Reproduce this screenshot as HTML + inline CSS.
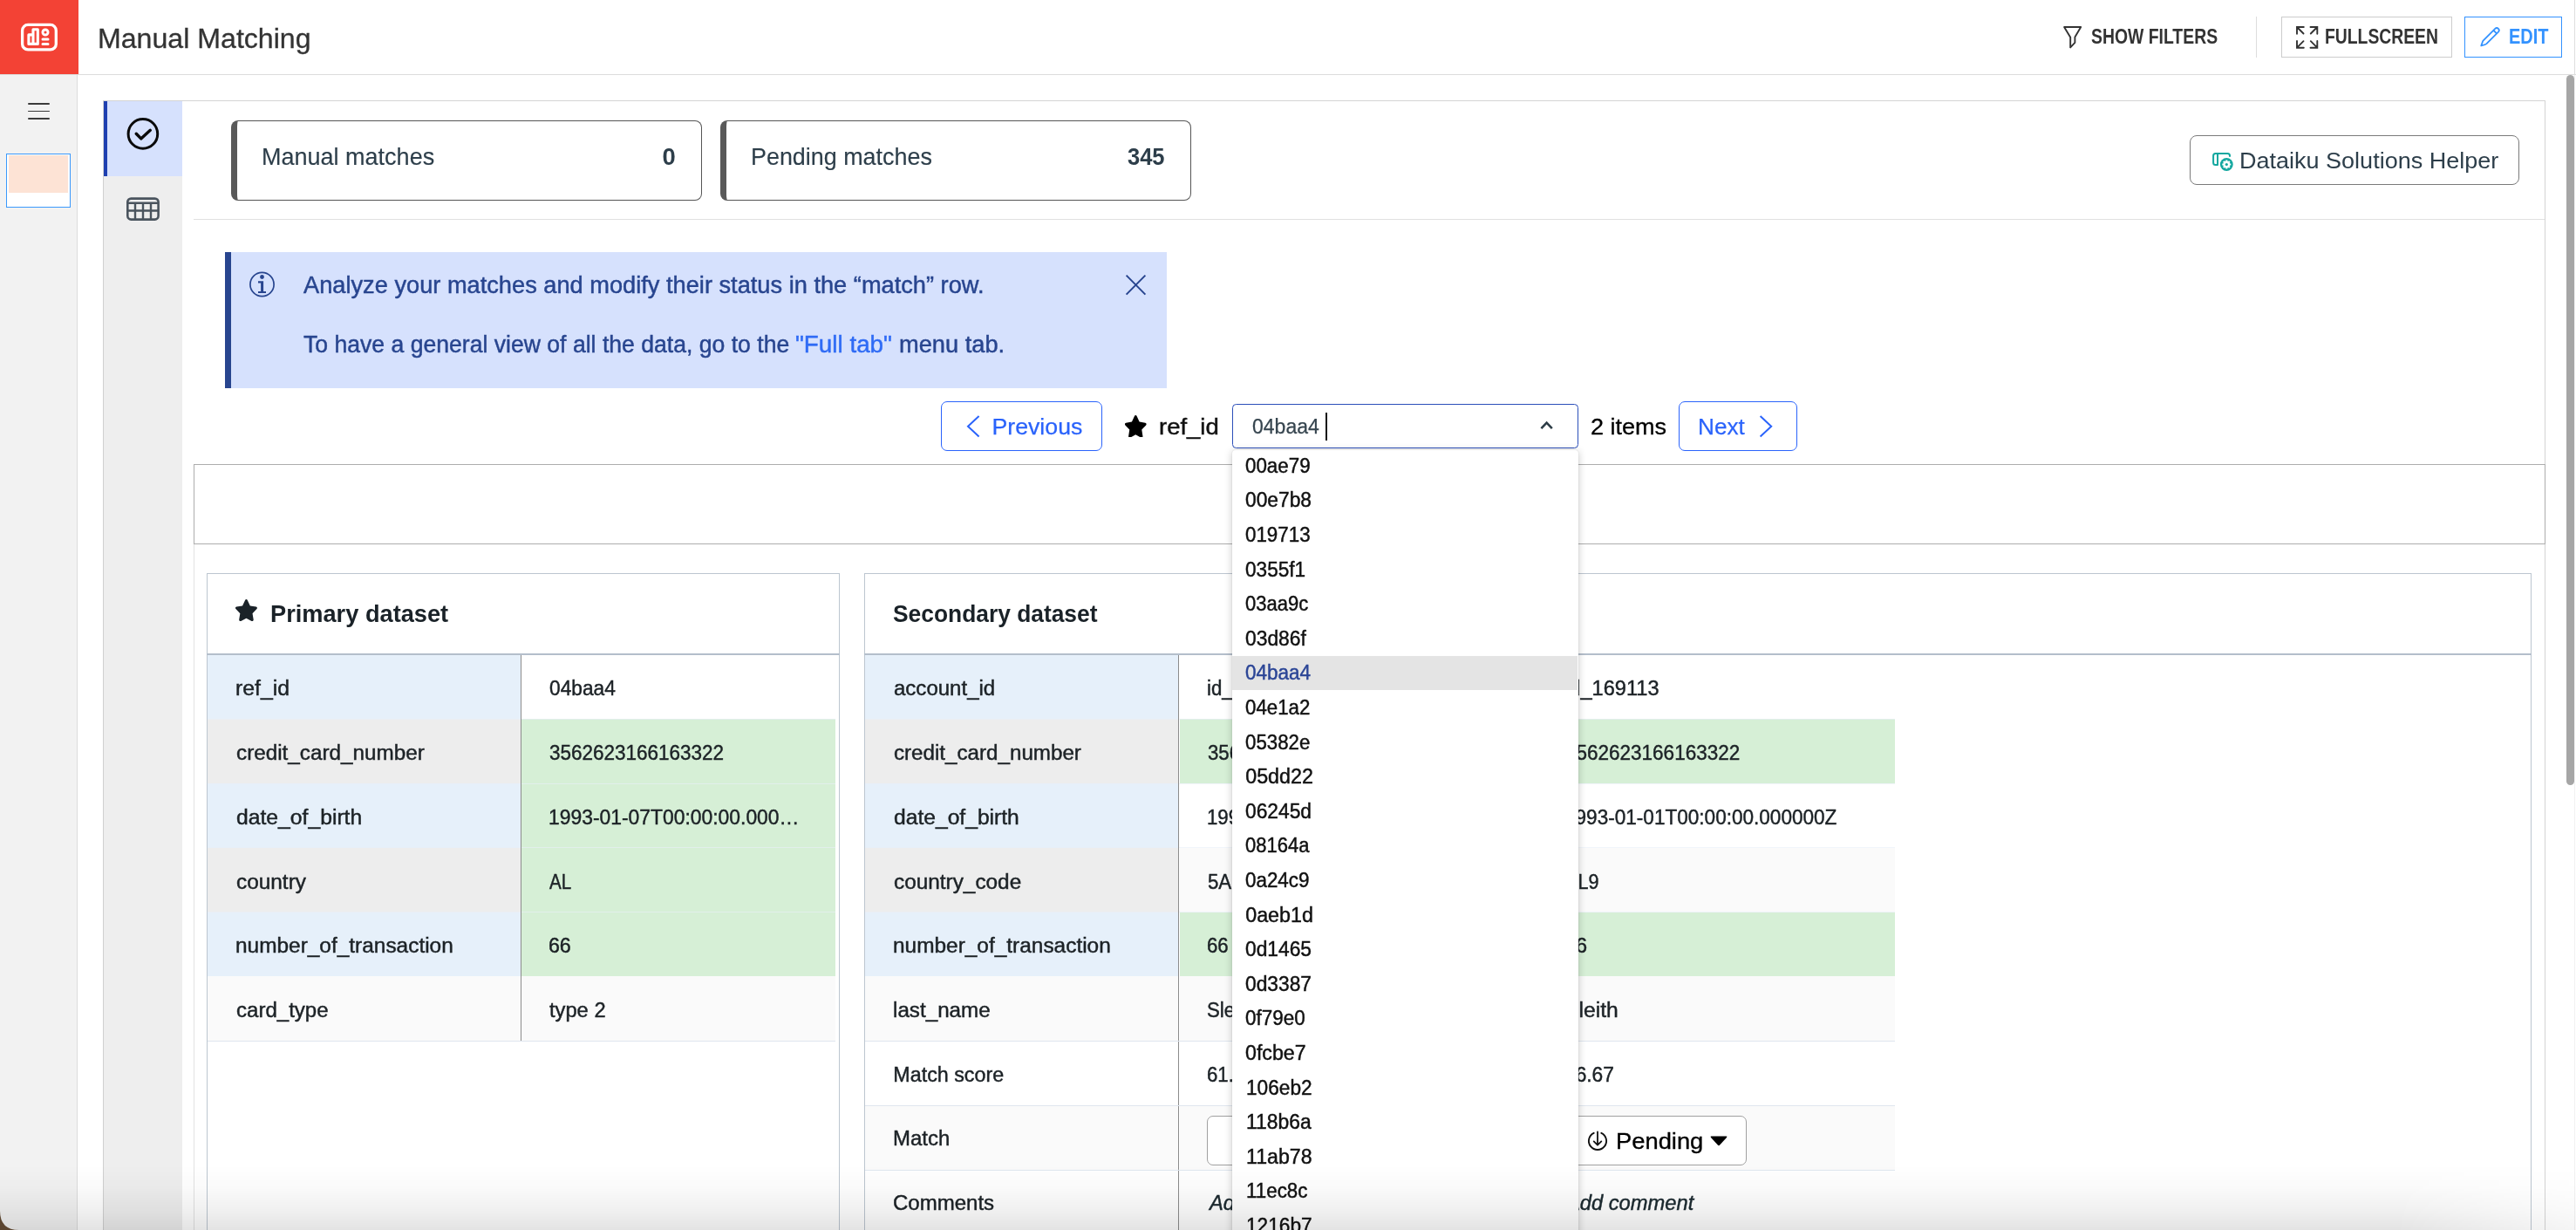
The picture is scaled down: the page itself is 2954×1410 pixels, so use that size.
<!DOCTYPE html>
<html><head><meta charset="utf-8"><title>Manual Matching</title>
<style>
html,body{margin:0;padding:0;}
html{width:2954px;height:1410px;overflow:hidden;}
body{width:2954px;height:1410px;position:relative;overflow:hidden;background:#fff;font-family:"Liberation Sans", sans-serif;}
div,span.t,svg{position:absolute;box-sizing:border-box;}
span.t{white-space:pre;display:block;transform-origin:0 0;-webkit-text-stroke:0.45px currentColor;}
span.b{-webkit-text-stroke:0 !important;}
</style></head><body><div id="root" style="left:0;top:0;width:2954px;height:1410px;overflow:hidden;will-change:transform;">
<div style="left:0px;top:0px;width:2954px;height:85px;background:#fff;"></div>
<div style="left:0px;top:85px;width:2954px;height:1px;background:#dcdcdc;"></div>
<div style="left:0px;top:0px;width:90px;height:85px;background:#f34235;"></div>
<svg style="left:0;top:0" width="90" height="85" viewBox="0 0 90 85" fill="none" stroke="#fff" stroke-linecap="round" stroke-linejoin="round">
<rect x="25.6" y="28.4" width="38.7" height="28.5" rx="6.5" stroke-width="3.3"/>
<path d="M32.9 50.4V39.9H38V33.7H43.3V50.4Z M38 39.9V50.4" stroke-width="3.1"/>
<circle cx="52" cy="37" r="3.05" stroke-width="2.9"/>
<path d="M49 45.1H55 M49 50.6H55" stroke-width="3"/>
</svg>
<span class="t" style="left:112.16px;top:29px;font-size:31.5px;line-height:31.5px;color:#333;transform:scaleX(1.0196);-webkit-text-stroke-width:0.3px;">Manual Matching</span>
<svg style="left:2360px;top:26px" width="34" height="34" viewBox="2360 26 34 34" fill="none" stroke="#333" stroke-width="1.9" stroke-linejoin="round">
<path d="M2367.1 31H2386.2L2379.4 42.5V48.8L2374.2 54.4V42.8Z"/></svg>
<span class="t b" style="left:2397.60px;top:31px;font-size:23.2px;line-height:23.2px;color:#333;font-weight:700;transform:scaleX(0.8364);">SHOW FILTERS</span>
<div style="left:2587px;top:19px;width:1px;height:47px;background:#ddd;"></div>
<div style="left:2616px;top:19px;width:196px;height:47px;border:1px solid #ccc;background:#fff;"></div>
<svg style="left:2628px;top:26px" width="36" height="34" viewBox="2628 26 36 34" fill="none" stroke="#333" stroke-width="1.9" stroke-linecap="round" stroke-linejoin="miter">
<path d="M2634 38.8V31H2641.8 M2634 31L2641.5 38.5"/>
<path d="M2649.5 31H2657.3V38.8 M2657.3 31L2649.8 38.5"/>
<path d="M2634 46.9V54.7H2641.8 M2634 54.7L2641.5 47.2"/>
<path d="M2649.5 54.7H2657.3V46.9 M2657.3 54.7L2649.8 47.2"/>
</svg>
<span class="t b" style="left:2666.17px;top:31px;font-size:23.2px;line-height:23.2px;color:#333;font-weight:700;transform:scaleX(0.8337);">FULLSCREEN</span>
<div style="left:2826px;top:19px;width:112px;height:47px;border:1.3px solid #3392ff;background:#fff;"></div>
<svg style="left:2840px;top:28px" width="32" height="30" viewBox="2840 28 32 30" fill="none" stroke="#3392ff" stroke-width="1.8" stroke-linejoin="round" stroke-linecap="round">
<path d="M2845.3 52.4L2847.3 46.8L2861.26 32.86A2.6 2.6 0 0 1 2864.94 36.54L2851.4 50.1Q2850.3 51 2845.3 52.4Z M2859.36 34.76L2863.04 38.44"/></svg>
<span class="t b" style="left:2876.64px;top:31px;font-size:23.2px;line-height:23.2px;color:#3392ff;font-weight:700;transform:scaleX(0.8615);">EDIT</span>
<div style="left:0px;top:86px;width:88px;height:1324px;background:#f2f2f2;"></div>
<div style="left:88px;top:86px;width:1px;height:1324px;background:#dcdcdc;"></div>
<div style="left:32px;top:118.4px;width:25px;height:1.8px;background:#3a3a3a;border-radius:1px;"></div>
<div style="left:32px;top:126.6px;width:25px;height:1.8px;background:#3a3a3a;border-radius:1px;"></div>
<div style="left:32px;top:134.8px;width:25px;height:1.8px;background:#3a3a3a;border-radius:1px;"></div>
<div style="left:7px;top:176px;width:74px;height:62px;background:#fff;border:1.5px solid #3b99fc;"></div>
<div style="left:10px;top:178px;width:68px;height:43px;background:#fde3d5;"></div>
<div style="left:118px;top:115px;width:2801px;height:1px;background:#d4d4d4;"></div>
<div style="left:118px;top:115px;width:1px;height:1295px;background:#d0d0d0;"></div>
<div style="left:119px;top:116px;width:90px;height:1294px;background:#eeeeee;"></div>
<div style="left:123px;top:116px;width:86px;height:86px;background:#d6e1fd;"></div>
<div style="left:119px;top:116px;width:4px;height:86px;background:#1f40b0;"></div>
<svg style="left:140px;top:130px" width="48" height="48" viewBox="140 130 48 48" fill="none" stroke="#0a0a0a" stroke-linecap="round" stroke-linejoin="round">
<circle cx="163.9" cy="153.4" r="16.8" stroke-width="3"/>
<path d="M156.2 153.2L161.7 158.9L172.3 149.3" stroke-width="3.4"/></svg>
<svg style="left:140px;top:222px" width="48" height="36" viewBox="140 222 48 36" fill="none" stroke="#4a545e" stroke-width="3">
<rect x="146.3" y="227.6" width="35.3" height="24" rx="4" stroke-width="2.6"/>
<path d="M146.4 232.8H181.5 M146.4 241.5H181.5 M155 232.8V251.5 M164 232.8V251.5 M173 232.8V251.5" stroke-width="2.4"/></svg>
<div style="left:2918px;top:115px;width:1px;height:1295px;background:#d4d4d4;"></div>
<div style="left:2952px;top:0px;width:1px;height:86px;background:#dedede;"></div>
<div style="left:2952px;top:86px;width:1px;height:1324px;background:#f1f1f1;"></div>
<div style="left:2943px;top:86px;width:9px;height:814px;background:#a6a6a6;border-radius:4.5px;"></div>
<div style="left:265px;top:138px;width:540px;height:92px;border:1.5px solid #555;border-left:7px solid #595959;border-radius:8px;background:#fff;"></div>
<span class="t" style="left:299.83px;top:166px;font-size:27.4px;line-height:27.4px;color:#2d3e4a;transform:scaleX(0.9860);-webkit-text-stroke-width:0.15px;">Manual matches</span>
<span class="t b" style="left:759.50px;top:166px;font-size:27.4px;line-height:27.4px;color:#2d3e4a;font-weight:700;">0</span>
<div style="left:826px;top:138px;width:540px;height:92px;border:1.5px solid #555;border-left:7px solid #595959;border-radius:8px;background:#fff;"></div>
<span class="t" style="left:860.84px;top:166px;font-size:27.4px;line-height:27.4px;color:#2d3e4a;transform:scaleX(0.9820);-webkit-text-stroke-width:0.15px;">Pending matches</span>
<span class="t b" style="left:1293.00px;top:166px;font-size:27.4px;line-height:27.4px;color:#2d3e4a;font-weight:700;transform:scaleX(0.9304);">345</span>
<div style="left:2511px;top:155.3px;width:378px;height:56.4px;border:1.5px solid #7a7a7a;border-radius:8px;background:#fff;"></div>
<svg style="left:2534px;top:170px" width="32" height="30" viewBox="2534 170 32 30" fill="none" stroke="#12a79f" stroke-width="2" stroke-linejoin="round">
<path d="M2557 179.8V178.4Q2557 175.9 2554.5 175.9H2540.6Q2538.1 175.9 2538.1 178.4V186.5Q2538.1 189 2540.6 189H2543V175.9"/>
<circle cx="2553.3" cy="188.5" r="7.4" fill="#12a79f" stroke="none"/>
<circle cx="2553.3" cy="188.5" r="3.9" fill="#fff" stroke="none"/>
<path d="M2556.70 188.50L2558.30 188.50 M2555.70 190.90L2556.84 192.04 M2553.30 191.90L2553.30 193.50 M2550.90 190.90L2549.76 192.04 M2549.90 188.50L2548.30 188.50 M2550.90 186.10L2549.76 184.96 M2553.30 185.10L2553.30 183.50 M2555.70 186.10L2556.84 184.96" stroke="#fff" stroke-width="2.1"/>
<circle cx="2553.3" cy="188.5" r="1.6" fill="#12a79f" stroke="none"/>
</svg>
<span class="t" style="left:2568.30px;top:172px;font-size:25.7px;line-height:25.7px;color:#2d3e4a;transform:scaleX(1.0514);-webkit-text-stroke-width:0px;">Dataiku Solutions Helper</span>
<div style="left:222px;top:251px;width:2696px;height:1px;background:#e0e0e0;"></div>
<div style="left:258px;top:289px;width:1080px;height:155.7px;background:#d6e1fd;"></div>
<div style="left:258px;top:289px;width:7px;height:155.7px;background:#28458f;"></div>
<svg style="left:284px;top:309px" width="34" height="34" viewBox="284 309 34 34" fill="none" stroke="#28458f">
<circle cx="300.5" cy="326" r="13.6" stroke-width="1.7"/>
<circle cx="300.5" cy="317.5" r="2.4" fill="#28458f" stroke="none"/>
<path d="M296 322.2H302.1V334.1H305V336H296V334.1H299.1V324.4H296Z" fill="#28458f" stroke="none"/></svg>
<span class="t" style="left:348.20px;top:314px;font-size:27px;line-height:27px;color:#28458f;transform:scaleX(1.0080);">Analyze your matches and modify their status in the “match” row.</span>
<span class="t" style="left:348.20px;top:382px;font-size:27px;line-height:27px;color:#28458f;transform:scaleX(0.9847);">To have a general view of all the data, go to the</span>
<span class="t" style="left:912.17px;top:382px;font-size:27px;line-height:27px;color:#2f6bf5;transform:scaleX(1.0299);">"Full tab"</span>
<span class="t" style="left:1030.79px;top:382px;font-size:27px;line-height:27px;color:#28458f;transform:scaleX(1.0087);">menu tab.</span>
<svg style="left:1286px;top:310px" width="34" height="34" viewBox="1286 310 34 34" fill="none" stroke="#28458f" stroke-width="2">
<path d="M1291.6 315.6L1313.4 337.6 M1313.4 315.6L1291.6 337.6"/></svg>
<div style="left:1079px;top:460px;width:185px;height:57px;border:1.5px solid #2a63fb;border-radius:7px;background:#fff;"></div>
<svg style="left:1104px;top:472px" width="24" height="34" viewBox="1104 472 24 34" fill="none" stroke="#2a63fb" stroke-width="2">
<path d="M1122.6 477L1110 488.7L1122.6 500.4"/></svg>
<span class="t" style="left:1137.50px;top:476px;font-size:26.7px;line-height:26.7px;color:#2a63fb;-webkit-text-stroke-width:0.25px;">Previous</span>
<svg style="left:1288.52px;top:475.50px" width="26.55" height="25.80" viewBox="0 0 576 512" preserveAspectRatio="none"><path fill="#000" d="M259.3 17.8L194 150.2 47.9 171.5c-26.2 3.8-36.7 36.1-17.7 54.6l105.7 103-25 145.5c-4.5 26.3 23.2 46 46.4 33.7L288 439.6l130.7 68.7c23.2 12.2 50.9-7.4 46.4-33.7l-25-145.5 105.7-103c19-18.5 8.5-50.8-17.7-54.6L382 150.2 316.7 17.8c-11.7-23.6-45.6-23.9-57.4 0z"/></svg>
<span class="t" style="left:1329.47px;top:476px;font-size:26.7px;line-height:26.7px;color:#111;transform:scaleX(1.0290);">ref_id</span>
<div style="left:1413px;top:463px;width:397px;height:50.5px;border:1.7px solid #2b4eb9;border-radius:4.5px;background:#fff;"></div>
<span class="t" style="left:1435.60px;top:478px;font-size:23.5px;line-height:23.5px;color:#36454f;transform:scaleX(0.9790);-webkit-text-stroke-width:0.25px;">04baa4</span>
<div style="left:1519.7px;top:473px;width:2px;height:31.5px;background:#111;"></div>
<svg style="left:1760px;top:476px" width="28" height="24" viewBox="1760 476 28 24" fill="none" stroke="#2e3d47" stroke-width="2.6">
<path d="M1767.4 491.2L1773.6 484.7L1779.8 491.2"/></svg>
<span class="t" style="left:1823.74px;top:477px;font-size:25.4px;line-height:25.4px;color:#000;transform:scaleX(1.0644);-webkit-text-stroke-width:0.3px;">2 items</span>
<div style="left:1925.3px;top:460px;width:135.6px;height:57px;border:1.5px solid #2a63fb;border-radius:7px;background:#fff;"></div>
<span class="t" style="left:1947.04px;top:476px;font-size:26.7px;line-height:26.7px;color:#2a63fb;transform:scaleX(0.9802);-webkit-text-stroke-width:0.25px;">Next</span>
<svg style="left:2012px;top:472px" width="26" height="34" viewBox="2012 472 26 34" fill="none" stroke="#2a63fb" stroke-width="2">
<path d="M2018.6 477L2031.2 488.7L2018.6 500.4"/></svg>
<div style="left:222px;top:624px;width:1px;height:790px;background:#e2e2e2;"></div>
<div style="left:222px;top:532px;width:2697px;height:92px;border:1px solid #adadad;background:#fff;"></div>
<div style="left:237.4px;top:657px;width:725.3px;height:760px;border:1px solid #bcc6d0;background:#fff;"></div>
<div style="left:237.4px;top:748.6px;width:725.3px;height:2px;background:#b4becb;"></div>
<svg style="left:268.96px;top:687.20px" width="26.87" height="25.20" viewBox="0 0 576 512" preserveAspectRatio="none"><path fill="#1a2228" d="M259.3 17.8L194 150.2 47.9 171.5c-26.2 3.8-36.7 36.1-17.7 54.6l105.7 103-25 145.5c-4.5 26.3 23.2 46 46.4 33.7L288 439.6l130.7 68.7c23.2 12.2 50.9-7.4 46.4-33.7l-25-145.5 105.7-103c19-18.5 8.5-50.8-17.7-54.6L382 150.2 316.7 17.8c-11.7-23.6-45.6-23.9-57.4 0z"/></svg>
<span class="t b" style="left:309.81px;top:690px;font-size:27.6px;line-height:27.6px;color:#1a2228;font-weight:700;transform:scaleX(0.9860);">Primary dataset</span>
<div style="left:238.4px;top:750.6px;width:358.6px;height:73.75px;background:#e6f0fa;"></div>
<div style="left:598.4px;top:750.6px;width:359.8px;height:73.75px;background:#ffffff;"></div>
<span class="t" style="left:269.83px;top:778px;font-size:23.3px;line-height:23.3px;color:#1c2226;transform:scaleX(1.0653);">ref_id</span>
<span class="t" style="left:629.90px;top:778px;font-size:23.3px;line-height:23.3px;color:#1c2226;transform:scaleX(0.9758);">04baa4</span>
<div style="left:238.4px;top:824.35px;width:358.6px;height:73.75px;background:#ededed;"></div>
<div style="left:598.4px;top:824.35px;width:359.8px;height:73.75px;background:#d6efd6;"></div>
<div style="left:238.4px;top:823.85px;width:719.8px;height:1px;background:rgba(232,238,248,0.6);"></div>
<span class="t" style="left:270.90px;top:852px;font-size:23.3px;line-height:23.3px;color:#1c2226;transform:scaleX(1.0413);">credit_card_number</span>
<span class="t" style="left:629.90px;top:852px;font-size:23.3px;line-height:23.3px;color:#1c2226;transform:scaleX(0.9654);">3562623166163322</span>
<div style="left:238.4px;top:898.1px;width:358.6px;height:73.75px;background:#e6f0fa;"></div>
<div style="left:598.4px;top:898.1px;width:359.8px;height:73.75px;background:#d6efd6;"></div>
<div style="left:238.4px;top:897.6px;width:719.8px;height:1px;background:rgba(232,238,248,0.6);"></div>
<span class="t" style="left:270.90px;top:926px;font-size:23.3px;line-height:23.3px;color:#1c2226;transform:scaleX(1.0604);">date_of_birth</span>
<span class="t" style="left:628.92px;top:926px;font-size:23.3px;line-height:23.3px;color:#1c2226;transform:scaleX(0.9819);">1993-01-07T00:00:00.000…</span>
<div style="left:238.4px;top:971.85px;width:358.6px;height:73.75px;background:#ededed;"></div>
<div style="left:598.4px;top:971.85px;width:359.8px;height:73.75px;background:#d6efd6;"></div>
<div style="left:238.4px;top:971.35px;width:719.8px;height:1px;background:rgba(232,238,248,0.6);"></div>
<span class="t" style="left:270.90px;top:1000px;font-size:23.3px;line-height:23.3px;color:#1c2226;transform:scaleX(1.0463);">country</span>
<span class="t" style="left:629.90px;top:1000px;font-size:23.3px;line-height:23.3px;color:#1c2226;transform:scaleX(0.8830);">AL</span>
<div style="left:238.4px;top:1045.6px;width:358.6px;height:73.75px;background:#e6f0fa;"></div>
<div style="left:598.4px;top:1045.6px;width:359.8px;height:73.75px;background:#d6efd6;"></div>
<div style="left:238.4px;top:1045.1px;width:719.8px;height:1px;background:rgba(232,238,248,0.6);"></div>
<span class="t" style="left:269.85px;top:1073px;font-size:23.3px;line-height:23.3px;color:#1c2226;transform:scaleX(1.0481);">number_of_transaction</span>
<span class="t" style="left:628.90px;top:1073px;font-size:23.3px;line-height:23.3px;color:#1c2226;">66</span>
<div style="left:238.4px;top:1119.35px;width:358.6px;height:73.75px;background:#fafafa;"></div>
<div style="left:598.4px;top:1119.35px;width:359.8px;height:73.75px;background:#fafafa;"></div>
<span class="t" style="left:270.90px;top:1147px;font-size:23.3px;line-height:23.3px;color:#1c2226;transform:scaleX(1.0320);">card_type</span>
<span class="t" style="left:629.90px;top:1147px;font-size:23.3px;line-height:23.3px;color:#1c2226;transform:scaleX(1.0175);">type 2</span>
<div style="left:597px;top:751px;width:1px;height:442.0999999999999px;background:#8c8c8c;"></div>
<div style="left:238.4px;top:1193.1px;width:719.8px;height:1px;background:#dfe6ef;"></div>
<div style="left:991.4px;top:657px;width:1912px;height:760px;border:1px solid #bcc6d0;background:#fff;"></div>
<div style="left:991.4px;top:748.6px;width:1912px;height:2px;background:#b4becb;"></div>
<span class="t b" style="left:1023.70px;top:690px;font-size:27.6px;line-height:27.6px;color:#1a2228;font-weight:700;transform:scaleX(0.9556);">Secondary dataset</span>
<div style="left:992.4px;top:750.6px;width:359px;height:73.75px;background:#e6f0fa;"></div>
<div style="left:1353px;top:750.6px;width:819.6px;height:73.75px;background:#ffffff;"></div>
<span class="t" style="left:1025.30px;top:778px;font-size:23.3px;line-height:23.3px;color:#1c2226;transform:scaleX(1.0311);">account_id</span>
<span class="t" style="left:1383.75px;top:778px;font-size:23.3px;line-height:23.3px;color:#1c2226;transform:scaleX(0.9550);">id_189212</span>
<span class="t" style="left:1793.69px;top:778px;font-size:23.3px;line-height:23.3px;color:#1c2226;transform:scaleX(1.0139);">id_169113</span>
<div style="left:992.4px;top:824.35px;width:359px;height:73.75px;background:#ededed;"></div>
<div style="left:1353px;top:824.35px;width:819.6px;height:73.75px;background:#d6efd6;"></div>
<div style="left:992.4px;top:823.85px;width:1180.2px;height:1px;background:rgba(232,238,248,0.6);"></div>
<span class="t" style="left:1025.30px;top:852px;font-size:23.3px;line-height:23.3px;color:#1c2226;transform:scaleX(1.0370);">credit_card_number</span>
<span class="t" style="left:1384.70px;top:852px;font-size:23.3px;line-height:23.3px;color:#1c2226;transform:scaleX(0.9550);">3562623166163322</span>
<span class="t" style="left:1794.70px;top:852px;font-size:23.3px;line-height:23.3px;color:#1c2226;transform:scaleX(0.9658);">3562623166163322</span>
<div style="left:992.4px;top:898.1px;width:359px;height:73.75px;background:#e6f0fa;"></div>
<div style="left:1353px;top:898.1px;width:819.6px;height:73.75px;background:#ffffff;"></div>
<div style="left:992.4px;top:897.6px;width:1180.2px;height:1px;background:rgba(232,238,248,0.6);"></div>
<span class="t" style="left:1025.30px;top:926px;font-size:23.3px;line-height:23.3px;color:#1c2226;transform:scaleX(1.0574);">date_of_birth</span>
<span class="t" style="left:1383.75px;top:926px;font-size:23.3px;line-height:23.3px;color:#1c2226;transform:scaleX(0.9550);">1993-01-07T00:00:00.000000Z</span>
<span class="t" style="left:1793.73px;top:926px;font-size:23.3px;line-height:23.3px;color:#1c2226;transform:scaleX(0.9686);">1993-01-01T00:00:00.000000Z</span>
<div style="left:992.4px;top:971.85px;width:359px;height:73.75px;background:#ededed;"></div>
<div style="left:1353px;top:971.85px;width:819.6px;height:73.75px;background:#fafafa;"></div>
<div style="left:992.4px;top:971.35px;width:1180.2px;height:1px;background:rgba(232,238,248,0.6);"></div>
<span class="t" style="left:1025.30px;top:1000px;font-size:23.3px;line-height:23.3px;color:#1c2226;transform:scaleX(1.0452);">country_code</span>
<span class="t" style="left:1384.70px;top:1000px;font-size:23.3px;line-height:23.3px;color:#1c2226;transform:scaleX(0.9550);">5AL</span>
<span class="t" style="left:1794.70px;top:1000px;font-size:23.3px;line-height:23.3px;color:#1c2226;transform:scaleX(0.9260);">AL9</span>
<div style="left:992.4px;top:1045.6px;width:359px;height:73.75px;background:#e6f0fa;"></div>
<div style="left:1353px;top:1045.6px;width:819.6px;height:73.75px;background:#d6efd6;"></div>
<div style="left:992.4px;top:1045.1px;width:1180.2px;height:1px;background:rgba(232,238,248,0.6);"></div>
<span class="t" style="left:1024.25px;top:1073px;font-size:23.3px;line-height:23.3px;color:#1c2226;transform:scaleX(1.0481);">number_of_transaction</span>
<span class="t" style="left:1383.75px;top:1073px;font-size:23.3px;line-height:23.3px;color:#1c2226;transform:scaleX(0.9550);">66</span>
<span class="t" style="left:1793.69px;top:1073px;font-size:23.3px;line-height:23.3px;color:#1c2226;transform:scaleX(1.0102);">66</span>
<div style="left:992.4px;top:1119.35px;width:359px;height:73.75px;background:#fafafa;"></div>
<div style="left:1353px;top:1119.35px;width:819.6px;height:73.75px;background:#fafafa;"></div>
<span class="t" style="left:1024.26px;top:1147px;font-size:23.3px;line-height:23.3px;color:#1c2226;transform:scaleX(1.0395);">last_name</span>
<span class="t" style="left:1383.75px;top:1147px;font-size:23.3px;line-height:23.3px;color:#1c2226;transform:scaleX(0.9550);">Sleith</span>
<span class="t" style="left:1793.64px;top:1147px;font-size:23.3px;line-height:23.3px;color:#1c2226;transform:scaleX(1.0600);">Sleith</span>
<div style="left:992.4px;top:1193.1px;width:359px;height:73.75px;background:#ffffff;"></div>
<div style="left:1353px;top:1193.1px;width:819.6px;height:73.75px;background:#ffffff;"></div>
<span class="t" style="left:1024.30px;top:1221px;font-size:23.3px;line-height:23.3px;color:#1c2226;">Match score</span>
<span class="t" style="left:1383.75px;top:1221px;font-size:23.3px;line-height:23.3px;color:#1c2226;transform:scaleX(0.9550);">61.11</span>
<span class="t" style="left:1793.72px;top:1221px;font-size:23.3px;line-height:23.3px;color:#1c2226;transform:scaleX(0.9762);">66.67</span>
<div style="left:992.4px;top:1266.85px;width:359px;height:73.75px;background:#fafafa;"></div>
<div style="left:1353px;top:1266.85px;width:819.6px;height:73.75px;background:#fafafa;"></div>
<span class="t" style="left:1024.27px;top:1294px;font-size:23.3px;line-height:23.3px;color:#1c2226;transform:scaleX(1.0279);">Match</span>
<div style="left:1384.4px;top:1279.05px;width:218px;height:57px;border:1.5px solid #a0a0a0;border-radius:7px;background:#fff;"></div>
<svg style="left:1417.4px;top:1294.05px" width="28" height="28" viewBox="-14 -14 28 28" fill="none" stroke="#111" stroke-width="2" stroke-linecap="round" stroke-linejoin="round">
<path d="M-4.3 -9.2A10.1 10.1 0 1 0 4.3 -9.2" stroke-width="1.9"/><path d="M0 -10.6V4.4 M-4.3 0.4L0 4.7L4.3 0.4" stroke-width="1.8"/></svg>
<span class="t" style="left:1452.57px;top:1296px;font-size:25.7px;line-height:25.7px;color:#000;transform:scaleX(1.0639);-webkit-text-stroke-width:0.35px;">Pending</span>
<svg style="left:1559.4px;top:1300.6499999999999px" width="22" height="14" viewBox="0 0 22 14"><path d="M2.6 1.6H19.4Q21.2 1.6 20 3L12.2 11.6Q11 12.8 9.8 11.6L2 3Q0.8 1.6 2.6 1.6Z" fill="#000"/></svg>
<div style="left:1784.6px;top:1279.05px;width:218px;height:57px;border:1.5px solid #a0a0a0;border-radius:7px;background:#fff;"></div>
<svg style="left:1817.6px;top:1294.05px" width="28" height="28" viewBox="-14 -14 28 28" fill="none" stroke="#111" stroke-width="2" stroke-linecap="round" stroke-linejoin="round">
<path d="M-4.3 -9.2A10.1 10.1 0 1 0 4.3 -9.2" stroke-width="1.9"/><path d="M0 -10.6V4.4 M-4.3 0.4L0 4.7L4.3 0.4" stroke-width="1.8"/></svg>
<span class="t" style="left:1852.77px;top:1296px;font-size:25.7px;line-height:25.7px;color:#000;transform:scaleX(1.0639);-webkit-text-stroke-width:0.35px;">Pending</span>
<svg style="left:1959.6px;top:1300.6499999999999px" width="22" height="14" viewBox="0 0 22 14"><path d="M2.6 1.6H19.4Q21.2 1.6 20 3L12.2 11.6Q11 12.8 9.8 11.6L2 3Q0.8 1.6 2.6 1.6Z" fill="#000"/></svg>
<div style="left:992.4px;top:1340.6px;width:359px;height:73.75px;background:#ffffff;"></div>
<div style="left:1353px;top:1340.6px;width:819.6px;height:73.75px;background:#ffffff;"></div>
<span class="t" style="left:1024.27px;top:1368px;font-size:23.3px;line-height:23.3px;color:#1c2226;transform:scaleX(1.0308);">Comments</span>
<span class="t" style="left:1386.57px;top:1367px;font-size:24px;line-height:24px;color:#1c2a30;font-style:italic;transform:scaleX(0.9875);">Add comment</span>
<span class="t" style="left:1796.37px;top:1367px;font-size:24px;line-height:24px;color:#1c2a30;font-style:italic;transform:scaleX(0.9875);">Add comment</span>
<div style="left:1351px;top:751px;width:1px;height:700px;background:#8c8c8c;"></div>
<div style="left:992.4px;top:1193.1px;width:1180.2px;height:1px;background:#dfe6ef;"></div>
<div style="left:992.4px;top:1266.85px;width:1180.2px;height:1px;background:#dfe6ef;"></div>
<div style="left:992.4px;top:1340.6px;width:1180.2px;height:1px;background:#dfe6ef;"></div>
<div style="left:1413px;top:515.5px;width:397px;height:920px;background:#fff;border-radius:4px;box-shadow:0 1px 10px rgba(0,0,0,0.22),0 0 2px rgba(0,0,0,0.12);"></div>
<div style="left:1413px;top:752.4px;width:395.5px;height:38.6px;background:#e4e4e4;"></div>
<span class="t" style="left:1428.20px;top:523px;font-size:23.3px;line-height:23.3px;color:#111;transform:scaleX(0.9598);">00ae79</span>
<span class="t" style="left:1428.20px;top:562px;font-size:23.3px;line-height:23.3px;color:#111;transform:scaleX(0.9781);">00e7b8</span>
<span class="t" style="left:1428.20px;top:602px;font-size:23.3px;line-height:23.3px;color:#111;transform:scaleX(0.9598);">019713</span>
<span class="t" style="left:1428.20px;top:642px;font-size:23.3px;line-height:23.3px;color:#111;transform:scaleX(0.9701);">0355f1</span>
<span class="t" style="left:1428.20px;top:681px;font-size:23.3px;line-height:23.3px;color:#111;transform:scaleX(0.9442);">03aa9c</span>
<span class="t" style="left:1428.20px;top:721px;font-size:23.3px;line-height:23.3px;color:#111;transform:scaleX(0.9807);">03d86f</span>
<span class="t" style="left:1428.20px;top:760px;font-size:23.3px;line-height:23.3px;color:#2b4596;transform:scaleX(0.9655);">04baa4</span>
<span class="t" style="left:1428.20px;top:800px;font-size:23.3px;line-height:23.3px;color:#111;transform:scaleX(0.9559);">04e1a2</span>
<span class="t" style="left:1428.20px;top:840px;font-size:23.3px;line-height:23.3px;color:#111;transform:scaleX(0.9559);">05382e</span>
<span class="t" style="left:1428.20px;top:879px;font-size:23.3px;line-height:23.3px;color:#111;">05dd22</span>
<span class="t" style="left:1428.20px;top:919px;font-size:23.3px;line-height:23.3px;color:#111;transform:scaleX(0.9781);">06245d</span>
<span class="t" style="left:1428.20px;top:958px;font-size:23.3px;line-height:23.3px;color:#111;transform:scaleX(0.9436);">08164a</span>
<span class="t" style="left:1428.20px;top:998px;font-size:23.3px;line-height:23.3px;color:#111;transform:scaleX(0.9606);">0a24c9</span>
<span class="t" style="left:1428.20px;top:1038px;font-size:23.3px;line-height:23.3px;color:#111;">0aeb1d</span>
<span class="t" style="left:1428.20px;top:1077px;font-size:23.3px;line-height:23.3px;color:#111;transform:scaleX(0.9781);">0d1465</span>
<span class="t" style="left:1428.20px;top:1117px;font-size:23.3px;line-height:23.3px;color:#111;transform:scaleX(0.9781);">0d3387</span>
<span class="t" style="left:1428.20px;top:1156px;font-size:23.3px;line-height:23.3px;color:#111;transform:scaleX(0.9635);">0f79e0</span>
<span class="t" style="left:1428.20px;top:1196px;font-size:23.3px;line-height:23.3px;color:#111;transform:scaleX(0.9958);">0fcbe7</span>
<span class="t" style="left:1428.63px;top:1236px;font-size:23.3px;line-height:23.3px;color:#111;transform:scaleX(0.9725);">106eb2</span>
<span class="t" style="left:1428.62px;top:1275px;font-size:23.3px;line-height:23.3px;color:#111;transform:scaleX(0.9820);">118b6a</span>
<span class="t" style="left:1428.60px;top:1315px;font-size:23.3px;line-height:23.3px;color:#111;transform:scaleX(0.9952);">11ab78</span>
<span class="t" style="left:1428.64px;top:1354px;font-size:23.3px;line-height:23.3px;color:#111;transform:scaleX(0.9595);">11ec8c</span>
<span class="t" style="left:1428.63px;top:1394px;font-size:23.3px;line-height:23.3px;color:#111;transform:scaleX(0.9725);">1216b7</span>
<div style="left:0px;top:1335px;width:2954px;height:75px;background:linear-gradient(to bottom, rgba(0,0,0,0) 0%, rgba(0,0,0,0.02) 35%, rgba(0,0,0,0.06) 70%, rgba(0,0,0,0.11) 100%);-webkit-mask-image:linear-gradient(to right,#000 0%,#000 93%,rgba(0,0,0,0.35) 100%);mask-image:linear-gradient(to right,#000 0%,#000 93%,rgba(0,0,0,0.35) 100%);"></div>
<svg style="left:0;top:1388px" width="22" height="22" viewBox="0 0 22 22"><path d="M0 0V22H22Q0 22 0 0Z" fill="#5b4530"/></svg>
</div></body></html>
